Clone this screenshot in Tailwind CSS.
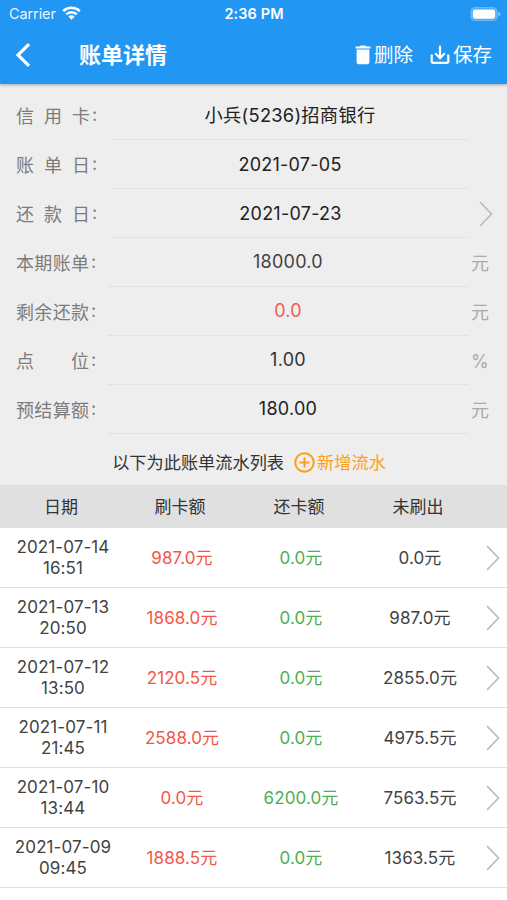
<!DOCTYPE html>
<html lang="zh-CN">
<head>
  <meta charset="UTF-8" />
  <meta name="viewport" content="width=device-width, initial-scale=1.0" />
  <title>账单详情</title>
  <script src="https://cdn.jsdelivr.net/npm/@tailwindcss/browser@4"></script>
</head>
<body class="bg-white h-[900px] overflow-hidden font-['Inter','Noto_Sans_CJK_SC',sans-serif] text-[#212121]">

  <!-- Header -->
  <header class="relative z-10 h-[84px] bg-[#2196f3] text-white shadow-[0_1px_3px_rgba(0,0,0,0.3)]">
    <div class="h-[27px] grid grid-cols-3 items-center pl-[9px] pr-[6px]">
      <div class="flex items-center gap-[6px] text-[14.5px] text-white/90">
        <span class="tracking-[-0.1px]">Carrier</span>
        <svg class="w-[19px] h-[14px] relative -top-px" viewBox="0 0 19 14" fill="none" stroke="#fff" stroke-width="2.5">
          <path d="M1.2 5.1a11.8 11.8 0 0 1 16.6 0" />
          <path d="M4.2 8.4a7.6 7.6 0 0 1 10.6 0" />
          <path d="M9.5 13.8 6.4 10.6a4.4 4.4 0 0 1 6.2 0z" fill="#fff" stroke="none" />
        </svg>
      </div>
      <div class="text-center text-[14.5px] font-semibold tracking-[0.1px] pr-[2px]">2:36 PM</div>
      <svg class="justify-self-end w-[31px] h-[14px]" viewBox="0 0 31 14">
        <rect x="1" y="0.6" width="26" height="12.8" rx="4" fill="#fff" fill-opacity="0.15" stroke="#fff" stroke-opacity="0.3" stroke-width="1.2" />
        <rect x="2.8" y="2.4" width="22.4" height="9.4" rx="2.4" fill="#fff" />
        <path d="M28.4 4.8q2 .8 2 2.3t-2 2.3z" fill="#fff" fill-opacity="0.5" />
      </svg>
    </div>
    <div class="h-[56px] flex items-center pl-[15px] pr-[15px]">
      <svg class="w-4 h-6" viewBox="0 0 16 24" fill="none" stroke="#fff" stroke-width="3.2">
        <path d="M14 1.2 3 12l11 10.8" />
      </svg>
      <h1 class="ml-12 text-[22px] font-bold">账单详情</h1>
      <button class="ml-auto pt-[2px] flex items-center gap-[3px] text-[19.5px]">
        <svg class="w-[16px] h-[20px] relative -top-px" viewBox="0 0 16 20" fill="#fff">
          <path d="M.6 1.4h4L5.7.4h4.6l1.1 1h4v2.100H.6zM1.6 4.500h12.800v12.500q0 2.200-2.200 2.200H3.800q-2.200 0-2.200-2.200z" />
        </svg>
        删除
      </button>
      <button class="ml-[17px] pt-[2px] flex items-center gap-[3px] text-[19.5px]">
        <svg class="w-[20px] h-[20px] relative -top-px" viewBox="0 0 20 20" fill="none" stroke="#fff" stroke-width="2.2">
          <path d="M1.7 9.5v6.800q0 1.600 1.600 1.600h13.400q1.600 0 1.600-1.600V9.500M10 .8v12M5.200 8.300l4.800 4.800 4.800-4.800" />
        </svg>
        保存
      </button>
    </div>
  </header>

  <!-- Bill form -->
  <section class="bg-[#eeeeee] h-[401px] pt-[7px]">
    <div id="form"></div>
    <div class="h-[58px] flex items-center justify-center pr-[9px] text-[17.2px] text-[#333]">
      <span>以下为此账单流水列表</span>
      <button class="ml-[10px] flex items-center gap-[2px] text-[#ff9e1b]">
        <svg class="w-[21px] h-[21px]" viewBox="0 0 21 21" fill="none" stroke="currentColor" stroke-width="2">
          <circle cx="10.5" cy="10.5" r="9.3" />
          <path d="M10.5 5.500v10M5.5 10.500h10" />
        </svg>
        新增流水
      </button>
    </div>
  </section>

  <!-- Transactions -->
  <div class="h-[43px] pt-[2px] bg-[#e0e0e0] grid grid-cols-[122px_116px_122px_116px] items-center text-center text-[17px] text-[#333]">
    <span>日期</span>
    <span>刷卡额</span>
    <span>还卡额</span>
    <span>未刷出</span>
  </div>
  <div id="list"></div>

  <script>
    const arrow = `
      <svg class="w-[14px] h-[26px]" viewBox="0 0 14 26" fill="none" stroke="#bdbdbd" stroke-width="1.8">
        <path d="M1 1l11.500 12L1 25" />
      </svg>`;

    // short labels sit in a slightly wider column
    const wide = 'grid-cols-[96px_356px_1fr]';
    const narrow = 'grid-cols-[92px_360px_1fr]';

    const fields = [
      ['信 用 卡', '小兵(5236)招商银行', '', wide, 'text-[#212121] text-[18.3px] pt-[2px]', 'w-[74px]'],
      ['账 单 日', '2021-07-05', '', wide, 'text-[#212121] pt-px', 'w-[74px]'],
      ['还 款 日', '2021-07-23', arrow, wide, 'text-[#212121] pl-px', 'w-[74px]'],
      ['本 期 账 单', '18000.0', '元', narrow, 'text-[#424242] pb-[2px]', 'w-[73px]'],
      ['剩 余 还 款', '0.0', '元', narrow, 'text-[#f15b50] pb-px', 'w-[73px]'],
      ['点 位', '1.00', '%', narrow, 'text-[#333] pb-[2px]', 'w-[73px]'],
      ['预 结 算 额', '180.00', '元', narrow, 'text-[#212121] pb-px', 'w-[73px]'],
    ];

    document.getElementById('form').innerHTML = fields.map(([label, value, unit, cols, color, width]) => `
      <div class="h-[49px] grid ${cols} pl-4 text-[18px]">
        <div class="flex items-center pt-[2px] text-[18px] text-[#7c7c7c]">
          <div class="${width} flex justify-between">${label.split(' ').map(c => `<span>${c}</span>`).join('')}</div>
          <span class="ml-[2px] pb-[4px]">:</span>
        </div>
        <div class="flex items-center justify-center border-b border-[#e2e2e2] tracking-[0.25px] ${color}">${value}</div>
        <div class="flex items-center pt-[2px] pl-[3px] text-[#aaa] ${unit === arrow ? 'justify-end pr-[14px] pb-[2px]' : ''}">${unit}</div>
      </div>`).join('');

    const rows = [
      ['2021-07-14', '16:51', '987.0元', '0.0元', '0.0元'],
      ['2021-07-13', '20:50', '1868.0元', '0.0元', '987.0元'],
      ['2021-07-12', '13:50', '2120.5元', '0.0元', '2855.0元'],
      ['2021-07-11', '21:45', '2588.0元', '0.0元', '4975.5元'],
      ['2021-07-10', '13:44', '0.0元', '6200.0元', '7563.5元'],
      ['2021-07-09', '09:45', '1888.5元', '0.0元', '1363.5元'],
    ];

    document.getElementById('list').innerHTML = rows.map(([date, time, spent, repaid, left]) => `
      <div class="h-[60px] grid grid-cols-[126px_112px_126px_112px_1fr] items-center border-b border-[#e0e0e0] text-center text-[17px] tracking-[0.1px] text-[#424242]">
        <div class="leading-[21px]">${date}<br>${time}</div>
        <div class="pt-[2px] text-[#f4564a]">${spent}</div>
        <div class="pt-[2px] text-[#4caf50]">${repaid}</div>
        <div class="pt-[2px]">${left}</div>
        <div class="flex justify-end pt-px pr-[7px]">${arrow}</div>
      </div>`).join('');
  </script>
</body>
</html>
